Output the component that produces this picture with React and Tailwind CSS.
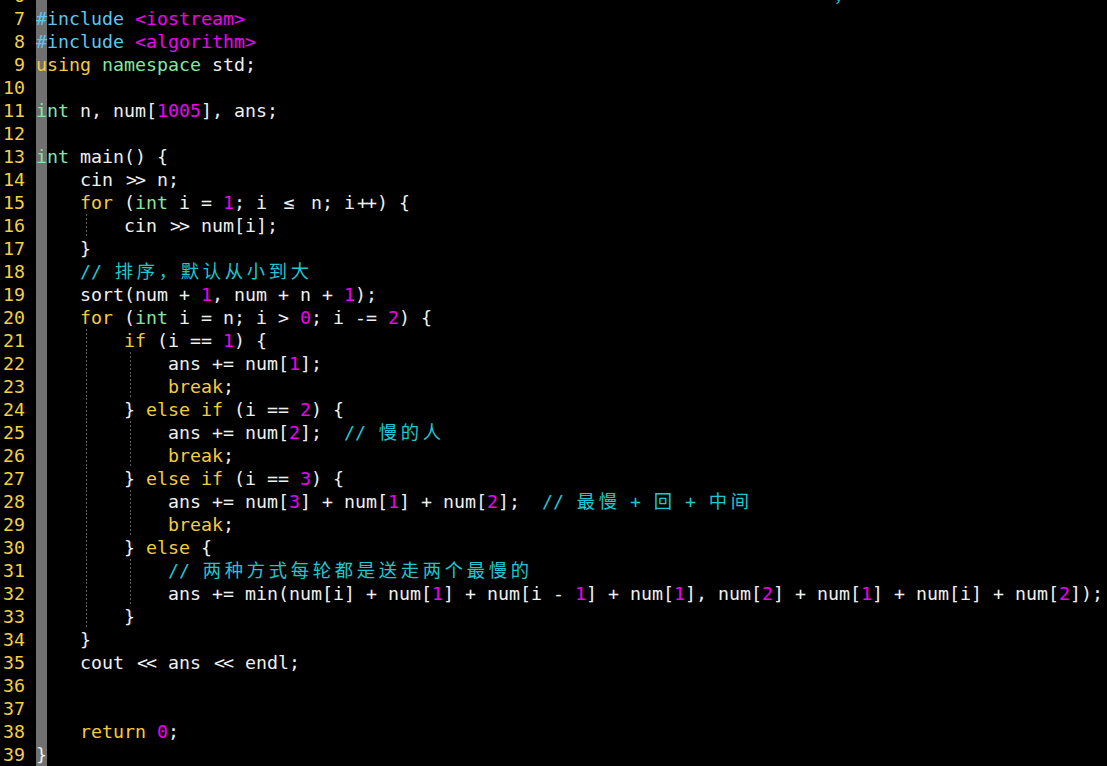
import React from "react";

const KEYWORDS = ["using", "for", "if", "else", "break", "return"];
const TYPES = ["int", "namespace"];

const LINES = [
  [6, null],
  [7, "#include <iostream>"],
  [8, "#include <algorithm>"],
  [9, "using namespace std;"],
  [10, ""],
  [11, "int n, num[1005], ans;"],
  [12, ""],
  [13, "int main() {"],
  [14, "    cin >> n;"],
  [15, "    for (int i = 1; i <= n; i++) {"],
  [16, "        cin >> num[i];"],
  [17, "    }"],
  [18, "    // 排序，默认从小到大"],
  [19, "    sort(num + 1, num + n + 1);"],
  [20, "    for (int i = n; i > 0; i -= 2) {"],
  [21, "        if (i == 1) {"],
  [22, "            ans += num[1];"],
  [23, "            break;"],
  [24, "        } else if (i == 2) {"],
  [25, "            ans += num[2];  // 慢的人"],
  [26, "            break;"],
  [27, "        } else if (i == 3) {"],
  [28, "            ans += num[3] + num[1] + num[2];  // 最慢 + 回 + 中间"],
  [29, "            break;"],
  [30, "        } else {"],
  [31, "            // 两种方式每轮都是送走两个最慢的"],
  [32, "            ans += min(num[i] + num[1] + num[i - 1] + num[1], num[2] + num[1] + num[i] + num[2]);"],
  [33, "        }"],
  [34, "    }"],
  [35, "    cout << ans << endl;"],
  [36, ""],
  [37, ""],
  [38, "    return 0;"],
  [39, "}"],
];

// wide chars (CJK, fullwidth punctuation) take two cells
function Wide({ text, className }) {
  const parts = [];
  let run = "";
  [...text].forEach((ch, i) => {
    if (ch.charCodeAt(0) > 255) {
      if (run) parts.push(<span key={"r" + i}>{run}</span>);
      run = "";
      parts.push(
        <span key={i} className="inline-block w-[22px] text-center align-top">
          {ch}
        </span>
      );
    } else run += ch;
  });
  if (run) parts.push(<span key="end">{run}</span>);
  return <span className={className}>{parts}</span>;
}

function Ligature({ text }) {
  return (
    <span className="inline-block w-[22px] text-center align-top tracking-[-2px] text-[#f0f0f0]">
      {text}
    </span>
  );
}

function renderCode(code) {
  const re = /(#include)|(<[a-z]+>)|([A-Za-z_]\w*)|(\d+)|(<=|>>|<<|\+\+)|(\s+)|(.)/g;
  const out = [];
  let m;
  let k = 0;
  while ((m = re.exec(code))) {
    const t = m[0];
    k++;
    if (m[1]) out.push(<span key={k} className="text-[#5ac8f0]">{t}</span>);
    else if (m[2]) out.push(<span key={k} className="text-[#f000f0]">{t}</span>);
    else if (m[3]) {
      const cls = KEYWORDS.includes(t)
        ? "text-[#f5cc3d]"
        : TYPES.includes(t)
        ? "text-[#86e6a0]"
        : "text-[#f0f0f0]";
      out.push(<span key={k} className={cls}>{t}</span>);
    } else if (m[4]) out.push(<span key={k} className="text-[#f000f0]">{t}</span>);
    else if (m[5]) {
      if (t === "<=")
        out.push(
          <span key={k} className="inline-block w-[22px] text-center align-top text-[#f0f0f0]">
            ≤
          </span>
        );
      else out.push(<Ligature key={k} text={t} />);
    } else out.push(<span key={k} className="text-[#f0f0f0]">{t}</span>);
  }
  return out;
}

function CodeLine({ text }) {
  if (text === null) {
    // only the tail of a comment peeks in at the top
    return (
      <span>
        {" ".repeat(72)}
        <span className="inline-block w-[22px] pl-[6px] align-top text-[#1ec8d2]">，</span>
      </span>
    );
  }
  const lead = text.match(/^ */)[0].length;
  const level = Math.floor(lead / 4);
  const body = text.slice(level * 4);
  const ci = body.indexOf("//");
  const code = ci >= 0 ? body.slice(0, ci) : body;
  const comment = ci >= 0 ? body.slice(ci) : "";

  return (
    <>
      {[...Array(level)].map((_, i) =>
        i === 0 ? (
          <span key={i} className="inline-block w-[44px] h-[23px] align-top" />
        ) : (
          <span key={i} className="inline-block w-[44px] h-[23px] align-top pl-[6px]">
            <span className="block h-full w-px bg-[repeating-linear-gradient(180deg,#5c5c5c_0_2px,transparent_2px_4px)]" />
          </span>
        )
      )}
      {renderCode(code)}
      {comment && <Wide text={comment} className="text-[#1ec8d2]" />}
    </>
  );
}

export default function App() {
  return (
    <div className="h-[766px] w-full overflow-hidden bg-black bg-[linear-gradient(90deg,transparent_36px,#707070_36px,#707070_47px,transparent_47px)] flex flex-col justify-end font-['DejaVu_Sans_Mono','Noto_Sans_CJK_SC',monospace] text-[18.27px] leading-[23px]">
      {LINES.map(([n, text]) => (
        <div key={n} className="flex h-[23px] shrink-0 whitespace-pre">
          <span className="w-[36px] shrink-0 text-right pr-[11px] text-[#f5cf45]">{n}</span>
          <div className="flex-1 overflow-hidden whitespace-pre">
            <CodeLine text={text} />
          </div>
        </div>
      ))}
    </div>
  );
}
